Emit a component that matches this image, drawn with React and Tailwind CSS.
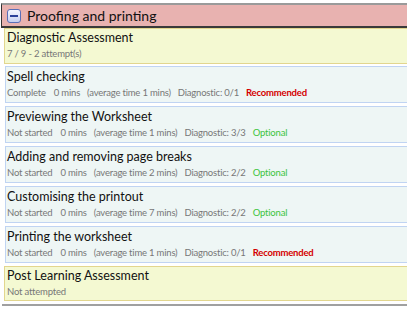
const items = [
	{ title: 'Spell checking', status: 'Complete', avg: 1, diag: '0/1', tag: 'Recommended' },
	{ title: 'Previewing the Worksheet', status: 'Not started', avg: 1, diag: '3/3', tag: 'Optional' },
	{ title: 'Adding and removing page breaks', status: 'Not started', avg: 2, diag: '2/2', tag: 'Optional' },
	{ title: 'Customising the printout', status: 'Not started', avg: 7, diag: '2/2', tag: 'Optional' },
	{ title: 'Printing the worksheet', status: 'Not started', avg: 1, diag: '0/1', tag: 'Recommended' },
];

const MinusIcon = () => (
	<div className="w-[14px] h-[14px] rounded-[3px] border border-[#5a6fb8] bg-gradient-to-b from-[#f4f6ff] to-[#c6cff0] flex items-center justify-center">
		<div className="w-[8px] h-[2px] bg-[#2a3f9a]"></div>
	</div>
);

const Assessment = ({ title, sub, className }) => (
	<div className={`ml-[4px] border border-r-0 border-[#e2d68e] bg-[#f4f9d2] pl-[2px] ${className}`}>
		<div className="text-[12.5px] leading-[18px] text-[#111]">{title}</div>
		<div className="text-[9.5px] leading-[14px] tracking-[-0.2px] text-[#777]">{sub}</div>
	</div>
);

const Item = ({ item }) => (
	<div className="ml-[5px] h-[37px] border border-r-0 border-[#c0d4f2] bg-[#eef6f5] pl-[1px]">
		<div className="text-[12.5px] leading-[19px] text-[#111]">{item.title}</div>
		<div className="flex text-[9.5px] leading-[14px] tracking-[-0.2px] text-[#777] whitespace-nowrap">
			<span>{item.status}</span>
			<span className="ml-[8px]">0 mins</span>
			<span className="ml-[7px]">(average time {item.avg} mins)</span>
			<span className="ml-[7px]">Diagnostic: {item.diag}</span>
			{item.tag === 'Recommended' ? (
				<span className="ml-[7px] font-bold text-[#d40000]">Recommended</span>
			) : (
				<span className="ml-[7px] text-[#3cc43c]">Optional</span>
			)}
		</div>
	</div>
);

const App = () => {
	return (
		<div className="w-[407px] h-[312px] bg-white overflow-hidden pt-[3px] font-['Lato',sans-serif]">
			{/* Section header */}
			<div className="ml-[1px] h-[25px] border-t-2 border-t-[#9a9a9a] border-l border-l-[#333] border-b-2 border-b-[#3a3a3a] bg-[#e8b2b0] flex items-center pl-[5px] gap-[6px]">
				<MinusIcon />
				<span className="text-[14px] text-[#111] leading-none">Proofing and printing</span>
			</div>

			<Assessment className="h-[36px] mb-[2px]" title="Diagnostic Assessment" sub="7 / 9 - 2 attempt(s)" />
			<div className="flex flex-col gap-[3px]">
				{items.map((item) => (
					<Item key={item.title} item={item} />
				))}
				<Assessment className="h-[35px]" title="Post Learning Assessment" sub="Not attempted" />
			</div>

			{/* Bottom rule */}
			<div className="mt-[3px] ml-[2px] h-[2px] bg-[#a0a0a0]"></div>
		</div>
	);
};

export default App;
